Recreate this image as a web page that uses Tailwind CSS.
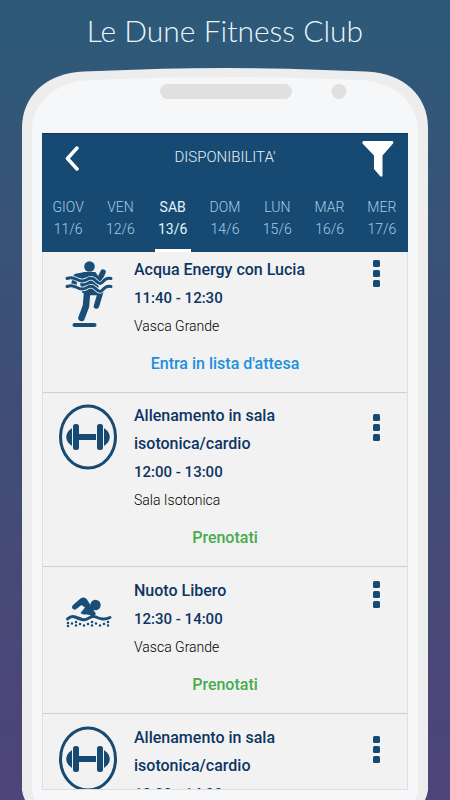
<!DOCTYPE html>
<html lang="it">
<head>
<meta charset="utf-8">
<meta name="viewport" content="width=device-width, initial-scale=1">
<title>Le Dune Fitness Club</title>
<script src="https://cdn.jsdelivr.net/npm/@tailwindcss/browser@4"></script>
</head>
<body class="flex h-screen flex-col overflow-hidden bg-linear-to-b from-[#2c5a78] via-[#3f4d76] to-[#4e4478] font-['Roboto',sans-serif]">
<svg class="hidden" aria-hidden="true">
  <symbol id="dumbbell" viewBox="0 0 58 68">
    <ellipse cx="29" cy="35" rx="27.500" ry="31" fill="none" stroke="#174a72" stroke-width="3"/>
    <g fill="#174a72">
      <rect x="20" y="32" width="17" height="6"/>
      <rect x="14" y="22" width="6" height="26" rx="2.500"/>
      <rect x="38" y="22" width="6" height="26" rx="2.500"/>
      <path d="M13 26v18l-3.500-3q-1.500-2-2-4t0-4q.5-2 2-4zM45 26v18l3.500-3q1.500-2 2-4t0-4q-.5-2-2-4z"/>
    </g>
  </symbol>
  <symbol id="aqua" viewBox="0 0 58 68">
    <g fill="none" stroke="#1b4e76" stroke-linecap="round" stroke-linejoin="round">
      <circle cx="30.500" cy="6.500" r="5.300" fill="#1b4e76" stroke="none"/>
      <path d="M25 13h11l3 5-1 14H24l-2-9z" fill="#1b4e76" stroke-width="2"/>
      <path d="M25 15l-8 1.500-2.500 9M38 21q4-3 6-9" stroke-width="5.500"/>
      <path d="M28 33l-1 13-4.500 12" stroke-width="6.500"/>
      <path d="M28 32.500h13.500L37.500 46" stroke-width="5.500"/>
      <path d="M15.500 65h20" stroke-width="4"/>
      <path d="M8 18.500q5-2 10 1t10 0 9 1.500 7 .500 8-3M8 26.500q5-2 10 1t10 0 9 1.500 7 .500 8-3" stroke="#f2f2f2" stroke-width="4.500"/>
      <path d="M8 18.500q5-2 10 1t10 0 9 1.500 7 .500 8-3M8 26.500q5-2 10 1t10 0 9 1.500 7 .500 8-3" stroke-width="3"/>
    </g>
  </symbol>
  <symbol id="swimmer" viewBox="0 0 58 68">
    <circle cx="36.500" cy="28" r="5.200" fill="#1b4e76"/>
    <path d="M21.500 21.500L14 28q-2 2.500 0 4t4-.5l4.500-3.500 3.500 2.500-4.500 5.500q2.500 2 5 1.500t5 1 5.500-1.500L28 22.500q-2.500-3.500-6.500-1z" fill="#1b4e76"/>
    <path d="M8.500 42q3.500-3.500 7.500-2t7 2.500 7-1.500 7-1 6.500 2 7.500-1.500" fill="none" stroke="#1b4e76" stroke-width="3" stroke-linecap="round"/>
    <path d="M9 46h.01M9 49h.01M13 46.500h.01M17 45h.01M17 48.500h.01M21 47h.01M25 48.500h.01M29 47h.01M33 45h.01M33 48.500h.01M37 46.500h.01M41 48.500h.01M45 47h.01M49 45h.01M49 48.500h.01" stroke="#1b4e76" stroke-width="2.600" stroke-linecap="round"/>
  </symbol>
  <symbol id="dots" viewBox="0 0 7 27">
    <g fill="#174a72">
      <rect width="7" height="7" rx="1.500"/>
      <rect y="10" width="7" height="7" rx="1.500"/>
      <rect y="20" width="7" height="7" rx="1.500"/>
    </g>
  </symbol>
</svg>

<h1 class="pt-[10px] pb-[18px] text-center font-['Lato',sans-serif] text-[30px] leading-10 font-light text-[#e9f6fb]">Le Dune Fitness Club</h1>

<div class="mx-[22px] flex min-h-0 flex-1 flex-col">
  <svg class="h-[65px] w-full shrink-0" viewBox="0 0 406 65" preserveAspectRatio="none" aria-hidden="true">
    <path d="M0 65V60C0 28 24 5 62 3.500L140 .8Q203-.8 266 .8L344 3.500C382 5 406 28 406 60v5z" fill="#ededed"/>
    <path d="M10 65V62C10 34 34 14 68 12L140 9.800Q203 8.600 266 9.800L338 12C372 14 396 34 396 62v3z" fill="#f6f7f9"/>
    <rect x="138" y="16" width="132" height="15" rx="7.500" fill="#e0e0e0"/>
    <circle cx="317" cy="23.500" r="7.500" fill="#e0e0e0"/>
  </svg>
  <div class="flex min-h-0 flex-1 flex-col border-x-10 border-[#ededed] bg-[#f6f7f9] px-[10px]">
    <header class="shrink-0 border-t border-[#0b3561] bg-[#174a72] text-[#a6cce6]">
      <div class="grid h-[50px] grid-cols-[1fr_auto_1fr] items-center pr-[14px] pl-[14px]">
        <button type="button" aria-label="Indietro" class="w-8 justify-self-start pl-2">
          <svg class="h-[26px] w-4" viewBox="0 0 16 26" fill="none" stroke="#fff" stroke-width="3.500" stroke-linecap="round" stroke-linejoin="round"><path d="M13 2L3.500 12.500L13 23"/></svg>
        </button>
        <h2 class="pb-1 text-[15px] font-light text-[#e3f2fb]">DISPONIBILITA'</h2>
        <button type="button" aria-label="Filtra" class="justify-self-end">
          <svg class="h-9 w-8" viewBox="0 0 32 36" fill="#fff"><path d="M1.500 0h29q1.500 1 .5 2.500L20.500 14.500V35q-1 1.500-2.500 0l-6-7V14.500L.5 2.500Q0 .5 1.500 0z"/></svg>
        </button>
      </div>
      <nav class="grid grid-cols-7 pt-3 text-center text-[14px] leading-[22px] font-light" aria-label="Giorni">
        <a href="#" class="flex flex-col items-center pb-3"><span>GIOV</span><span>11/6</span></a>
        <a href="#" class="flex flex-col items-center pb-3"><span>VEN</span><span>12/6</span></a>
        <a href="#" aria-current="date" class="mx-2 flex flex-col items-center border-b-3 border-white pb-[9px] font-normal text-[#e3f4fd]"><span>SAB</span><span>13/6</span></a>
        <a href="#" class="flex flex-col items-center pb-3"><span>DOM</span><span>14/6</span></a>
        <a href="#" class="flex flex-col items-center pb-3"><span>LUN</span><span>15/6</span></a>
        <a href="#" class="flex flex-col items-center pb-3"><span>MAR</span><span>16/6</span></a>
        <a href="#" class="flex flex-col items-center pb-3"><span>MER</span><span>17/6</span></a>
      </nav>
    </header>
    <ul class="min-h-0 flex-1 overflow-hidden border border-t-0 border-[#dedfe1] bg-[#f2f2f2] text-[#0d3563]">
      <li class="border-b border-[#cfcfd1] pt-1 pb-[14px]">
        <div class="flex items-start pr-[27px] pl-4">
          <svg class="mt-1 h-[68px] w-[58px] shrink-0" aria-hidden="true"><use href="#aqua"/></svg>
          <div class="ml-[17px] flex-1">
            <h3 class="text-[16px] leading-7 font-medium">Acqua Energy con Lucia</h3>
            <p class="text-[15px] leading-7 font-medium">11:40 - 12:30</p>
            <p class="text-[14px] leading-7 font-light text-black">Vasca Grande</p>
          </div>
          <button type="button" aria-label="Altre opzioni" class="mt-1"><svg class="h-[27px] w-[7px]"><use href="#dots"/></svg></button>
        </div>
        <button type="button" class="mx-auto mt-[10px] block text-[16px] leading-7 font-medium text-[#1e8fdf]">Entra in lista d'attesa</button>
      </li>
      <li class="border-b border-[#cfcfd1] pt-[9px] pb-[14px]">
        <div class="flex items-start pr-[27px] pl-4">
          <svg class="h-[68px] w-[58px] shrink-0" aria-hidden="true"><use href="#dumbbell"/></svg>
          <div class="ml-[17px] flex-1">
            <h3 class="max-w-[180px] text-[16px] leading-7 font-medium">Allenamento in sala isotonica/cardio</h3>
            <p class="text-[15px] leading-7 font-medium">12:00 - 13:00</p>
            <p class="text-[14px] leading-7 font-light text-black">Sala Isotonica</p>
          </div>
          <button type="button" aria-label="Altre opzioni" class="mt-3"><svg class="h-[27px] w-[7px]"><use href="#dots"/></svg></button>
        </div>
        <button type="button" class="mx-auto mt-[10px] block text-[16px] leading-7 font-medium text-[#48ab50]">Prenotati</button>
      </li>
      <li class="border-b border-[#cfcfd1] pt-[10px] pb-[14px]">
        <div class="flex items-start pr-[27px] pl-4">
          <svg class="h-[68px] w-[58px] shrink-0" aria-hidden="true"><use href="#swimmer"/></svg>
          <div class="ml-[17px] flex-1">
            <h3 class="text-[16px] leading-7 font-medium">Nuoto Libero</h3>
            <p class="text-[15px] leading-7 font-medium">12:30 - 14:00</p>
            <p class="text-[14px] leading-7 font-light text-black">Vasca Grande</p>
          </div>
          <button type="button" aria-label="Altre opzioni" class="mt-1"><svg class="h-[27px] w-[7px]"><use href="#dots"/></svg></button>
        </div>
        <button type="button" class="mx-auto mt-[10px] block text-[16px] leading-7 font-medium text-[#48ab50]">Prenotati</button>
      </li>
      <li class="pt-[10px] pb-[14px]">
        <div class="flex items-start pr-[27px] pl-4">
          <svg class="h-[68px] w-[58px] shrink-0" aria-hidden="true"><use href="#dumbbell"/></svg>
          <div class="ml-[17px] flex-1">
            <h3 class="max-w-[180px] text-[16px] leading-7 font-medium">Allenamento in sala isotonica/cardio</h3>
            <p class="text-[15px] leading-7 font-medium">13:00 - 14:00</p>
          </div>
          <button type="button" aria-label="Altre opzioni" class="mt-3"><svg class="h-[27px] w-[7px]"><use href="#dots"/></svg></button>
        </div>
      </li>
    </ul>
  </div>
  <svg class="h-[10px] w-full shrink-0" viewBox="0 0 406 10" preserveAspectRatio="none" aria-hidden="true">
    <path d="M0 0h406q-.5 5-3 10H3Q.5 5 0 0z" fill="#ededed"/>
    <path d="M10 0h386q-.5 5-3 10H13Q10.500 5 10 0z" fill="#f6f7f9"/>
  </svg>
</div>
</body>
</html>
